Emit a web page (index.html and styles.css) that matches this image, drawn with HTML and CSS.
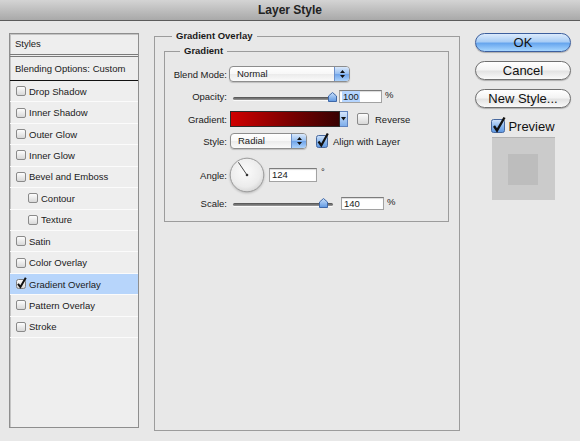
FILE: index.html
```html
<!DOCTYPE html>
<html>
<head>
<meta charset="utf-8">
<title>Layer Style</title>
<link rel="stylesheet" href="styles.css">
</head>
<body>
<div class="titlebar">Layer Style</div>
<div class="content">
  <div class="styles-panel">
    <div class="sp-header">Styles</div>
    <div class="sp-blend">Blending Options: Custom</div>
    <div class="sp-row"><span class="cb"></span>Drop Shadow</div>
    <div class="sp-row"><span class="cb"></span>Inner Shadow</div>
    <div class="sp-row"><span class="cb"></span>Outer Glow</div>
    <div class="sp-row"><span class="cb"></span>Inner Glow</div>
    <div class="sp-row"><span class="cb"></span>Bevel and Emboss</div>
    <div class="sp-row sub"><span class="cb"></span>Contour</div>
    <div class="sp-row sub"><span class="cb"></span>Texture</div>
    <div class="sp-row"><span class="cb"></span>Satin</div>
    <div class="sp-row"><span class="cb"></span>Color Overlay</div>
    <div class="sp-row selected">
      <svg class="cbsvg" width="10" height="10" viewBox="0 0 10 10">
        <defs><linearGradient id="g-cb1" x1="0" y1="0" x2="0" y2="1"><stop offset="0" stop-color="#fdfdfd"/><stop offset="1" stop-color="#d6d6d6"/></linearGradient></defs>
        <rect x="0.5" y="0.5" width="9" height="9" rx="2" fill="url(#g-cb1)" stroke="#7f7f7f"/>
        <path d="M2 4.8 L4.4 8 L9.8 -1.2" fill="none" stroke="#111" stroke-width="2"/>
      </svg>Gradient Overlay</div>
    <div class="sp-row"><span class="cb"></span>Pattern Overlay</div>
    <div class="sp-row"><span class="cb"></span>Stroke</div>
  </div>

  <div class="group outer">
    <div class="group-head"><span class="group-title">Gradient Overlay</span></div>
    <div class="group-body">
      <div class="group inner">
        <div class="group-head"><span class="group-title">Gradient</span></div>
        <div class="group-body form">
          <div class="frow r1">
            <span class="flabel">Blend Mode:</span>
            <div class="select blend">
              <span class="select-text">Normal</span>
              <span class="stepper"><svg width="7" height="10" viewBox="0 0 7 10"><path d="M3.5 1 L6 4 H1 Z M3.5 9 L6 6 H1 Z" fill="#111"/></svg></span>
            </div>
          </div>
          <div class="frow r2">
            <span class="flabel">Opacity:</span>
            <div class="slider">
              <div class="track"></div>
              <svg class="thumb" style="left:99px" width="9" height="10" viewBox="0 0 9 10">
                <defs><linearGradient id="g-t1" x1="0" y1="0" x2="0" y2="1"><stop offset="0" stop-color="#c9e0fa"/><stop offset="1" stop-color="#5f98e2"/></linearGradient></defs>
                <path d="M0.5 4 L4.5 0.5 L8.5 4 V9.5 H0.5 Z" fill="url(#g-t1)" stroke="#3f68a8"/>
              </svg>
            </div>
            <span class="field pct"><span class="sel">100</span></span>
            <span class="unit">%</span>
          </div>
          <div class="frow r3">
            <span class="flabel">Gradient:</span>
            <div class="swatch"></div>
            <span class="swatch-arrow"><svg width="5" height="4" viewBox="0 0 5 4"><path d="M0 0 H5 L2.5 3.5 Z" fill="#111"/></svg></span>
            <span class="cb form-cb"></span>
            <span class="cb-label">Reverse</span>
          </div>
          <div class="frow r4">
            <span class="flabel">Style:</span>
            <div class="select style">
              <span class="select-text">Radial</span>
              <span class="stepper"><svg width="7" height="10" viewBox="0 0 7 10"><path d="M3.5 1 L6 4 H1 Z M3.5 9 L6 6 H1 Z" fill="#111"/></svg></span>
            </div>
            <svg class="cbsvg align-cb" width="12" height="13" viewBox="0 0 12 13">
              <defs><linearGradient id="g-cb2" x1="0" y1="0" x2="0" y2="1"><stop offset="0" stop-color="#d3e5fb"/><stop offset="0.5" stop-color="#8db9ee"/><stop offset="1" stop-color="#5d97e2"/></linearGradient></defs>
              <rect x="0.5" y="0.5" width="11" height="12" rx="2" fill="url(#g-cb2)" stroke="#47689e"/>
              <path d="M2.5 6.5 L5.3 10.5 L11.8 -1.5" fill="none" stroke="#111" stroke-width="2.2"/>
            </svg>
            <span class="cb-label align-label">Align with Layer</span>
          </div>
          <div class="frow r5">
            <span class="flabel">Angle:</span>
            <svg class="dial" width="36" height="36" viewBox="0 0 36 36">
              <defs><radialGradient id="g-dial" cx="0.45" cy="0.4" r="0.65"><stop offset="0" stop-color="#fbfbfb"/><stop offset="0.7" stop-color="#ececec"/><stop offset="1" stop-color="#d2d2d2"/></radialGradient></defs>
              <circle cx="18" cy="18" r="16.8" fill="url(#g-dial)" stroke="#9b9b9b"/>
              <line x1="18" y1="18" x2="9.4" y2="5.3" stroke="#4a4a4a" stroke-width="1"/>
              <circle cx="18" cy="18" r="1.3" fill="#333"/>
            </svg>
            <span class="field angle">124</span>
            <span class="deg">°</span>
          </div>
          <div class="frow r6">
            <span class="flabel">Scale:</span>
            <div class="slider">
              <div class="track"></div>
              <svg class="thumb" style="left:90px" width="9" height="10" viewBox="0 0 9 10">
                <defs><linearGradient id="g-t2" x1="0" y1="0" x2="0" y2="1"><stop offset="0" stop-color="#c9e0fa"/><stop offset="1" stop-color="#5f98e2"/></linearGradient></defs>
                <path d="M0.5 4 L4.5 0.5 L8.5 4 V9.5 H0.5 Z" fill="url(#g-t2)" stroke="#3f68a8"/>
              </svg>
            </div>
            <span class="field pct scale">140</span>
            <span class="unit">%</span>
          </div>
        </div>
      </div>
    </div>
  </div>

  <div class="side">
    <div class="btn primary">OK</div>
    <div class="btn">Cancel</div>
    <div class="btn">New Style...</div>
    <div class="preview-row">
      <svg class="cbsvg" width="14" height="14" viewBox="0 0 14 14">
        <defs><linearGradient id="g-cb3" x1="0" y1="0" x2="0" y2="1"><stop offset="0" stop-color="#d3e5fb"/><stop offset="0.5" stop-color="#8db9ee"/><stop offset="1" stop-color="#5d97e2"/></linearGradient></defs>
        <rect x="0.5" y="0.5" width="13" height="13" rx="2" fill="url(#g-cb3)" stroke="#47689e"/>
        <path d="M3 7 L6 11.5 L13.5 -1.5" fill="none" stroke="#111" stroke-width="2.4"/>
      </svg>
      <span>Preview</span>
    </div>
    <div class="preview-box"><div class="preview-square"></div></div>
  </div>
</div>
</body>
</html>
```
FILE: styles.css
```css
* { box-sizing: border-box; }
html, body { margin: 0; padding: 0; }
body {
  width: 580px;
  height: 441px;
  overflow: hidden;
  background: #e8e8e8;
  font-family: "Liberation Sans", Arial, sans-serif;
  font-size: 9.5px;
  color: #1a1a1a;
}
svg { display: block; overflow: visible; flex: none; }

.titlebar {
  height: 21px;
  line-height: 20px;
  text-align: center;
  font-weight: bold;
  font-size: 12px;
  color: #222;
  background: linear-gradient(#d4d4d4, #a9a9a9);
  border-bottom: 1px solid #5c5c5c;
}

.content {
  display: flex;
  align-items: flex-start;
  padding: 9px 0 0 9px;
}

/* Styles list */
.styles-panel {
  width: 130px;
  height: 395px;
  margin-top: 3px;
  border: 1px solid #8e8e8e;
  background: #eeeeee;
  box-shadow: inset 1px 1px 0 #c4c4c4;
}
.sp-header {
  height: 23px;
  line-height: 20px;
  padding-left: 5px;
  border-bottom: 3px double #7a7a7a;
}
.sp-blend {
  height: 24px;
  line-height: 23px;
  padding-left: 5px;
  border-bottom: 1px solid #111;
}
.sp-row {
  height: 21.43px;
  display: flex;
  align-items: center;
  gap: 3px;
  padding-left: 6px;
  border-bottom: 1px solid #fbfbfb;
}
.sp-row.sub { padding-left: 18px; }
.sp-row.selected { background: #b7d5fb; }
.cb {
  width: 10px;
  height: 10px;
  flex: none;
  border: 1px solid #8a8a8a;
  border-radius: 2px;
  background: linear-gradient(#fdfdfd, #d8d8d8);
}

/* Group boxes */
.group { display: flex; flex-direction: column; }
.group-head {
  display: flex;
  height: 12px;
  line-height: 12px;
  font-weight: bold;
}
.group-head::before {
  content: "";
  width: 17px;
  margin-top: 6px;
  border-top: 1px solid #9c9c9c;
  border-left: 1px solid #9c9c9c;
}
.group-head::after {
  content: "";
  flex: 1;
  margin-top: 6px;
  border-top: 1px solid #9c9c9c;
  border-right: 1px solid #9c9c9c;
}
.group-title { padding: 0 4px; }
.group-body {
  flex: 1;
  border: 1px solid #9c9c9c;
  border-top: none;
}
.outer {
  width: 306px;
  height: 401px;
  margin-left: 15px;
}
.inner {
  margin: 3px 10px 0 9px;
}
.inner .group-head::before { width: 15px; }
.form {
  padding: 6px 0 13px 0;
}

/* Form rows */
.frow { display: flex; align-items: center; height: 22px; }
.frow.r2 { height: 23px; }
.frow.r5 { height: 46px; }
.frow.r6 { height: 10px; }
.flabel {
  width: 62px;
  margin-right: 2px;
  text-align: right;
  flex: none;
}

.select {
  display: flex;
  height: 16px;
  border: 1px solid #8d8d8d;
  border-radius: 4px;
  background: linear-gradient(#ffffff 0%, #f7f7f7 50%, #ebebeb 51%, #fafafa 100%);
  box-shadow: 0 1px 1px rgba(0, 0, 0, 0.18);
  overflow: hidden;
}
.select.blend { width: 121px; }
.select.style { width: 77px; margin-left: 1px; }
.select-text { flex: 1; padding-left: 7px; line-height: 14px; }
.stepper {
  width: 15px;
  display: flex;
  align-items: center;
  justify-content: center;
  background: linear-gradient(#d9e8fb, #94bdf0 50%, #6ea3ea 51%, #acd2fb);
  border-left: 1px solid #6b8fc9;
}

.slider {
  position: relative;
  width: 108px;
  height: 14px;
  display: flex;
  align-items: center;
  padding: 0 4px;
  flex: none;
}
.track {
  flex: 1;
  height: 3px;
  margin-top: 3px;
  border-radius: 2px;
  background: linear-gradient(#4e4e4e, #9a9a9a);
  box-shadow: 0 1px 0 #fafafa;
}
.thumb { position: absolute; top: 2px; }

.field {
  height: 13px;
  border: 1px solid #a2a2a2;
  border-top-color: #7c7c7c;
  background: #fff;
  box-shadow: inset 0 1px 1px rgba(0, 0, 0, 0.15);
  padding-left: 2px;
  line-height: 11px;
  flex: none;
}
.field.pct { width: 43px; margin-left: 2px; }
.field.scale { margin-left: 4px; }
.sel { background: #b5d5ff; padding: 0 1px; }
.unit { margin-left: 3px; margin-bottom: 4px; }

.swatch {
  width: 110px;
  height: 16px;
  margin-left: 1px;
  border: 1px solid #2b2b2b;
  background: linear-gradient(to right, #cf0000, #7a0000 55%, #380202);
}
.swatch-arrow {
  width: 8px;
  height: 16px;
  display: flex;
  align-items: center;
  justify-content: center;
  border: 1px solid #5f82bd;
  border-left: none;
  background: linear-gradient(#d4e5fb, #7eaeeb);
}
.form-cb { width: 12px; height: 12px; margin-left: 9px; }
.cb-label { margin-left: 6px; }
.align-cb { margin-left: 9px; }
.align-label { margin-left: 5px; }

.dial { filter: drop-shadow(0 1px 1px rgba(0, 0, 0, 0.2)); }
.field.angle { width: 48px; height: 14px; line-height: 12px; margin-left: 4px; }
.deg { align-self: flex-start; margin-top: 14px; margin-left: 4px; }

/* Right column */
.side {
  display: flex;
  flex-direction: column;
  align-items: center;
  width: 96px;
  margin-left: 15px;
  margin-top: 3px;
}
.btn {
  width: 96px;
  height: 19px;
  border: 1px solid #707070;
  border-radius: 10px;
  background: linear-gradient(#ffffff, #f4f4f4 45%, #e3e3e3 55%, #fafafa);
  box-shadow: 0 1px 1px rgba(0, 0, 0, 0.25);
  text-align: center;
  font-size: 13px;
  line-height: 17px;
  color: #111;
}
.btn + .btn { margin-top: 9px; }
.btn.primary {
  border-color: #3c5f9e;
  background: linear-gradient(#dcebfc, #a9cdf5 45%, #67a6ee 55%, #a6d6ff);
}
.preview-row {
  display: flex;
  align-items: center;
  gap: 3px;
  height: 14px;
  margin-top: 11px;
  font-size: 13px;
  color: #111;
}
.preview-box {
  width: 63px;
  height: 63px;
  margin-top: 4px;
  background: #cbcbcb;
  border-top: 1px solid #b3b3b3;
  display: flex;
  align-items: center;
  justify-content: center;
}
.preview-square {
  width: 30px;
  height: 31px;
  background: #bdbdbd;
}
```
